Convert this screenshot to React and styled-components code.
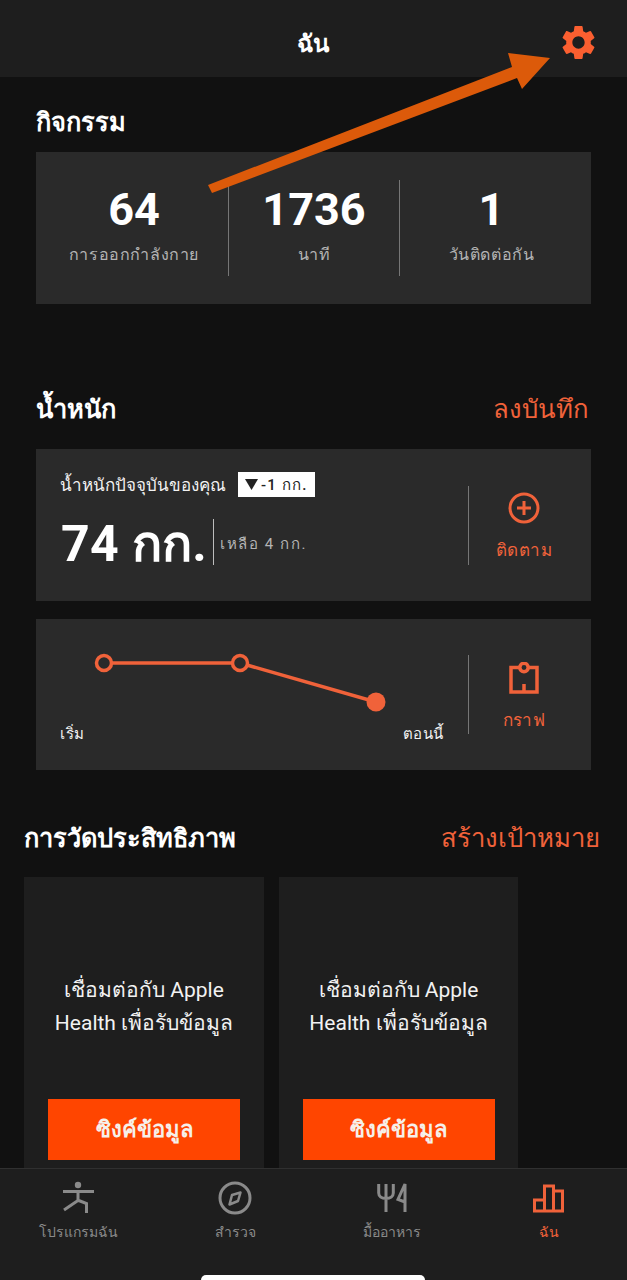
import React from "react";
import styled, { createGlobalStyle } from "styled-components";
import { MdSettings } from "react-icons/md";

const ORANGE = "#f0623a";
const FONT = `Roboto, "Liberation Sans", "Noto Sans", "DejaVu Sans", sans-serif`;

const Global = createGlobalStyle`
  html, body { margin: 0; padding: 0; background: #111111; }
  * { box-sizing: border-box; }
`;

const Screen = styled.div`
  position: relative;
  width: 627px;
  height: 1280px;
  overflow: hidden;
  display: flex;
  flex-direction: column;
  background: #111111;
  color: #fff;
  font-family: ${FONT};
`;

const Header = styled.header`
  flex: 0 0 77px;
  display: flex;
  align-items: center;
  justify-content: center;
  position: relative;
  background: #1e1e1e;
  padding: 9px 2px 0 0;
`;

const HeaderTitle = styled.h1`
  margin: 0;
  font-size: 24px;
  font-weight: 700;
`;

const GearButton = styled.div`
  position: absolute;
  left: 558px;
  top: 22px;
  width: 41px;
  height: 41px;
  color: #fb5f30;
  display: flex;
`;

const Main = styled.main`
  flex: 1;
  min-height: 0;
  overflow: hidden;
  display: flex;
  flex-direction: column;
`;

const Section = styled.section`
  padding: ${(p) => p.$pad || "0 36px"};
  display: flex;
  flex-direction: column;
  margin-top: ${(p) => p.$top || 0}px;
`;

const SectionHead = styled.div`
  display: flex;
  align-items: center;
  justify-content: space-between;
  height: 40px;
`;

const SectionTitle = styled.h2`
  margin: 0;
  font-size: 25.4px;
  font-weight: 700;
  line-height: 40px;
`;

const SectionLink = styled.span`
  font-size: 25.7px;
  color: ${ORANGE};
  line-height: 40px;
  margin-right: ${(p) => p.$right || 0}px;
`;

const Card = styled.div`
  background: #2a2a2a;
  height: ${(p) => p.$h || 152}px;
  margin-top: ${(p) => p.$top || 0}px;
  display: flex;
`;

const StatsGrid = styled.div`
  display: grid;
  grid-template-columns: 192px 171px 192px;
  width: 100%;
  padding-top: 28px;
  height: 124px;
`;

const Stat = styled.div`
  display: flex;
  flex-direction: column;
  align-items: center;
  height: 96px;
  padding: ${(p) => p.$pad || 0};
  border-left: ${(p) => (p.$divider ? "1px solid #767676" : "none")};
`;

const StatValue = styled.div`
  font-size: 45px;
  font-weight: 700;
  line-height: 60px;
`;

const StatLabel = styled.div`
  font-size: 16px;
  line-height: 32px;
  color: #b4b4b4;
  letter-spacing: 0.6px;
  margin-top: -1px;
  white-space: nowrap;
`;

const CardBody = styled.div`
  flex: 1;
  min-width: 0;
  padding: 23px 0 0 24px;
  display: flex;
  flex-direction: column;
`;

const WeightTop = styled.div`
  display: flex;
  align-items: center;
  gap: 12px;
  height: 25px;
`;

const WeightCaption = styled.span`
  font-size: 17px;
  color: #f2f2f2;
`;

const Badge = styled.span`
  background: #fff;
  color: #222;
  font-size: 15px;
  font-weight: 500;
  letter-spacing: 1.2px;
  height: 25px;
  padding: 0 7px;
  display: inline-flex;
  align-items: center;
  gap: 3px;
`;

const WeightRow = styled.div`
  display: flex;
  align-items: center;
  margin-top: 22px;
  height: 46px;
`;

const WeightValue = styled.div`
  font-size: 50px;
  font-weight: 700;
  letter-spacing: 0.3px;
  height: 46px;
  line-height: 50px;
  padding: 0 6px 0 1px;
  border-right: 1px solid #bdbdbd;
`;

const WeightRemain = styled.div`
  font-size: 15px;
  color: #b4b4b4;
  letter-spacing: 1.6px;
  margin: 3px 0 0 6px;
`;

const SideAction = styled.div`
  flex: 0 0 123px;
  display: flex;
  flex-direction: column;
  align-items: center;
  margin-top: ${(p) => p.$top}px;
  padding: ${(p) => p.$inset}px 12px 0 0;
  height: 79px;
  border-left: 1px solid #767676;
  color: ${ORANGE};
  font-size: 17px;
`;

const SideLabel = styled.span`
  margin-top: ${(p) => p.$gap}px;
  line-height: 24px;
  letter-spacing: 0.4px;
  white-space: nowrap;
`;

const ChartBody = styled.div`
  flex: 1;
  min-width: 0;
  padding: 0 0 0 24px;
  display: flex;
  flex-direction: column;
`;

const ChartSvg = styled.svg`
  display: block;
  margin-top: 24px;
`;

const ChartLabels = styled.div`
  display: flex;
  justify-content: space-between;
  padding-right: 24px;
  font-size: 15px;
  font-weight: 500;
  letter-spacing: 0.6px;
  color: #f2f2f2;
  margin-top: 9px;
`;

const MetricRow = styled.div`
  display: flex;
  gap: 15px;
  margin-top: 19px;
`;

const MetricCard = styled.div`
  width: ${(p) => p.$w}px;
  height: 300px;
  flex: none;
  background: #1e1e1e;
  display: flex;
  flex-direction: column;
  align-items: center;
  padding-top: 97px;
`;

const MetricText = styled.p`
  margin: 0;
  width: 190px;
  font-size: 21px;
  line-height: 33px;
  text-align: center;
  color: #f2f2f2;
  white-space: nowrap;
`;

const SyncButton = styled.div`
  margin-top: 59px;
  width: 192px;
  height: 61px;
  flex: none;
  background: #ff4500;
  display: flex;
  align-items: center;
  justify-content: center;
  font-size: 22px;
  font-weight: 700;
  color: #f6f0ea;
`;

const TabBar = styled.nav`
  flex: 0 0 112px;
  background: #1e1e1e;
  border-top: 1px solid #303030;
  display: grid;
  grid-template-columns: repeat(4, 1fr);
  align-content: start;
  padding-top: 11px;
  position: relative;
`;

const Tab = styled.div`
  display: flex;
  flex-direction: column;
  align-items: center;
  color: ${(p) => (p.$active ? ORANGE : "#8a8a8a")};
  font-size: 14px;
`;

const TabLabel = styled.span`
  line-height: 22px;
  margin-top: 5px;
`;

const HomeBar = styled.div`
  position: absolute;
  left: 201px;
  bottom: -5px;
  width: 224px;
  height: 10px;
  background: #fff;
  border-radius: 5px;
`;

const Arrow = styled.svg`
  position: absolute;
  left: 0;
  top: 0;
  pointer-events: none;
`;

const Icon = styled.svg`
  display: block;
  flex: none;
`;

const Triangle = styled.svg`
  display: block;
`;

const YogaIcon = () => (
  <Icon width="36" height="36" viewBox="0 0 36 36" fill="none" stroke="currentColor" strokeWidth="3">
    <circle cx="18" cy="5" r="3.2" fill="currentColor" stroke="none" />
    <path d="M3 11.5h31M18 11v9.5L4 30M17.5 20l9 3.5V33" />
  </Icon>
);

const CompassIcon = () => (
  <Icon width="36" height="36" viewBox="0 0 36 36" fill="none" stroke="currentColor">
    <circle cx="18" cy="18" r="15" strokeWidth="3" />
    <path d="M23.5 12.5L21 21l-8.5 3.5L15 15z" strokeWidth="2.5" strokeLinejoin="round" />
  </Icon>
);

const ForkKnifeIcon = () => (
  <Icon width="36" height="36" viewBox="0 0 36 36" fill="none" stroke="currentColor" strokeWidth="3">
    <path d="M4.7 4v9c0 3.5 3 5.5 7.3 5.5s7.3-2 7.3-5.5V4M12 4v28" />
    <path d="M31 32V4l-7 15.5 7 2.5" />
  </Icon>
);

const BarsIcon = () => (
  <Icon width="36" height="36" viewBox="0 0 36 36" fill="none" stroke="currentColor" strokeWidth="3">
    <path d="M3.5 31V20h10M13.5 31V6h9v25M22.5 11h9v20M2 31h31" />
  </Icon>
);

const PlusCircle = () => (
  <Icon width="34" height="34" viewBox="0 0 34 34" fill="none" stroke="currentColor" strokeWidth="3">
    <circle cx="17" cy="17" r="14" />
    <path d="M17 10v14M10 17h14" />
  </Icon>
);

const GraphIcon = () => (
  <Icon width="30" height="34" viewBox="0 0 30 34" fill="none" stroke="currentColor" strokeWidth="3.5">
    <path d="M2 5.5h26V30H2zM15 30v-8" />
    <circle cx="15" cy="5.5" r="4.2" fill="#2a2a2a" />
  </Icon>
);

const Metric = ({ w }) => (
  <MetricCard $w={w}>
    <MetricText>
      เชื่อมต่อกับ Apple
      <br />
      Health เพื่อรับข้อมูล
    </MetricText>
    <SyncButton>ซิงค์ข้อมูล</SyncButton>
  </MetricCard>
);

export default function App() {
  return (
    <>
      <Global />
      <Screen>
        <Header>
          <HeaderTitle>ฉัน</HeaderTitle>
          <GearButton>
            <MdSettings size={41} />
          </GearButton>
        </Header>
        <Main>
          <Section $top={25}>
            <SectionHead>
              <SectionTitle>กิจกรรม</SectionTitle>
            </SectionHead>
            <Card $top={10}>
              <StatsGrid>
                <Stat $pad="0 0 0 4px">
                  <StatValue>64</StatValue>
                  <StatLabel>การออกกำลังกาย</StatLabel>
                </Stat>
                <Stat $divider>
                  <StatValue>1736</StatValue>
                  <StatLabel>นาที</StatLabel>
                </Stat>
                <Stat $divider $pad="0 8px 0 0">
                  <StatValue>1</StatValue>
                  <StatLabel>วันติดต่อกัน</StatLabel>
                </Stat>
              </StatsGrid>
            </Card>
          </Section>

          <Section $top={85}>
            <SectionHead>
              <SectionTitle>น้ำหนัก</SectionTitle>
              <SectionLink $right={2}>ลงบันทึก</SectionLink>
            </SectionHead>
            <Card $top={20}>
              <CardBody>
                <WeightTop>
                  <WeightCaption>น้ำหนักปัจจุบันของคุณ</WeightCaption>
                  <Badge>
                    <Triangle width="13" height="11" viewBox="0 0 13 11">
                      <path d="M0 0h13L6.5 11z" fill="#222" />
                    </Triangle>
                    -1 กก.
                  </Badge>
                </WeightTop>
                <WeightRow>
                  <WeightValue>74 กก.</WeightValue>
                  <WeightRemain>เหลือ 4 กก.</WeightRemain>
                </WeightRow>
              </CardBody>
              <SideAction $top={37} $inset={5}>
                <PlusCircle />
                <SideLabel $gap={13}>ติดตาม</SideLabel>
              </SideAction>
            </Card>
            <Card $top={18} $h={151}>
              <ChartBody>
                <ChartSvg width="340" height="70" viewBox="0 0 340 70" fill="none">
                  <path d="M44 20h136l136 39" stroke={ORANGE} strokeWidth="3.5" />
                  <circle cx="44" cy="20" r="7.5" fill="#2a2a2a" stroke={ORANGE} strokeWidth="3.5" />
                  <circle cx="180" cy="20" r="7.5" fill="#2a2a2a" stroke={ORANGE} strokeWidth="3.5" />
                  <circle cx="316" cy="59" r="9.5" fill={ORANGE} />
                </ChartSvg>
                <ChartLabels>
                  <span>เริ่ม</span>
                  <span>ตอนนี้</span>
                </ChartLabels>
              </ChartBody>
              <SideAction $top={36} $inset={7}>
                <GraphIcon />
                <SideLabel $gap={12}>กราฟ</SideLabel>
              </SideAction>
            </Card>
          </Section>

          <Section $top={48} $pad="0 27px 0 24px">
            <SectionHead>
              <SectionTitle>การวัดประสิทธิภาพ</SectionTitle>
              <SectionLink $right={0}>สร้างเป้าหมาย</SectionLink>
            </SectionHead>
            <MetricRow>
              <Metric w={240} />
              <Metric w={239} />
            </MetricRow>
          </Section>
        </Main>
        <TabBar>
          <Tab>
            <YogaIcon />
            <TabLabel>โปรแกรมฉัน</TabLabel>
          </Tab>
          <Tab>
            <CompassIcon />
            <TabLabel>สำรวจ</TabLabel>
          </Tab>
          <Tab>
            <ForkKnifeIcon />
            <TabLabel>มื้ออาหาร</TabLabel>
          </Tab>
          <Tab $active>
            <BarsIcon />
            <TabLabel>ฉัน</TabLabel>
          </Tab>
          <HomeBar />
        </TabBar>
        <Arrow width="627" height="200" viewBox="0 0 627 200">
          <path d="M208 185L512 67L508 53L550 58L522 89L517 78L212 193Z" fill="#dc5a0a" />
        </Arrow>
      </Screen>
    </>
  );
}
